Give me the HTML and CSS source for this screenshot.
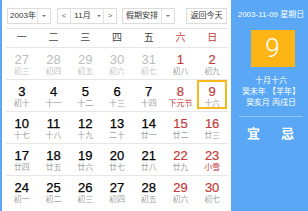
FILE: index.html
```html
<!DOCTYPE html>
<html lang="zh">
<head>
<meta charset="utf-8">
<link rel="stylesheet" href="styles.css">
</head>
<body>
<div class="cal">
  <div class="main">
    <div class="bar">
      <div class="ctl year"><span class="val">2003年</span><span class="arr"><i class="tri"></i></span></div>
      <div class="ctl month"><span class="nav">&lt;</span><span class="val">11月</span><span class="arr"><i class="tri"></i></span><span class="nav r">&gt;</span></div>
      <div class="ctl hol"><span class="val">假期安排</span><span class="arr"><i class="tri"></i></span></div>
      <div class="ctl today"><span class="val">返回今天</span></div>
    </div>
    <div class="wk head">
      <span>一</span><span>二</span><span>三</span><span>四</span><span>五</span><span class="red">六</span><span class="red">日</span>
    </div>
    <div class="wk">
      <div class="d other"><b>27</b><s>初三</s></div>
      <div class="d other"><b>28</b><s>初四</s></div>
      <div class="d other"><b>29</b><s>初五</s></div>
      <div class="d other"><b>30</b><s>初六</s></div>
      <div class="d other"><b>31</b><s>初七</s></div>
      <div class="d we"><b>1</b><s>初八</s></div>
      <div class="d we"><b>2</b><s>初九</s></div>
    </div>
    <div class="wk">
      <div class="d"><b>3</b><s>初十</s></div>
      <div class="d"><b>4</b><s>十一</s></div>
      <div class="d"><b>5</b><s>十二</s></div>
      <div class="d"><b>6</b><s>十三</s></div>
      <div class="d"><b>7</b><s>十四</s></div>
      <div class="d we fest"><b>8</b><s>下元节</s></div>
      <div class="d we cur"><b>9</b><s>十六</s></div>
    </div>
    <div class="wk">
      <div class="d"><b>10</b><s>十七</s></div>
      <div class="d"><b>11</b><s>十八</s></div>
      <div class="d"><b>12</b><s>十九</s></div>
      <div class="d"><b>13</b><s>二十</s></div>
      <div class="d"><b>14</b><s>廿一</s></div>
      <div class="d we"><b>15</b><s>廿二</s></div>
      <div class="d we"><b>16</b><s>廿三</s></div>
    </div>
    <div class="wk">
      <div class="d"><b>17</b><s>廿四</s></div>
      <div class="d"><b>18</b><s>廿五</s></div>
      <div class="d"><b>19</b><s>廿六</s></div>
      <div class="d"><b>20</b><s>廿七</s></div>
      <div class="d"><b>21</b><s>廿八</s></div>
      <div class="d we"><b>22</b><s>廿九</s></div>
      <div class="d we fest"><b>23</b><s>小雪</s></div>
    </div>
    <div class="wk">
      <div class="d"><b>24</b><s>初一</s></div>
      <div class="d"><b>25</b><s>初二</s></div>
      <div class="d"><b>26</b><s>初三</s></div>
      <div class="d"><b>27</b><s>初四</s></div>
      <div class="d"><b>28</b><s>初五</s></div>
      <div class="d we"><b>29</b><s>初六</s></div>
      <div class="d we"><b>30</b><s>初七</s></div>
    </div>
  </div>
  <div class="side">
    <div class="date">2003-11-09 星期日</div>
    <div class="big">9</div>
    <div class="lunar">十月十六</div>
    <div class="gz">癸未年 【羊年】</div>
    <div class="gz">癸亥月 丙戌日</div>
    <div class="yj"><span>宜</span><span>忌</span></div>
  </div>
</div>
</body>
</html>
```
FILE: styles.css
```css
html, body {
  margin: 0;
  padding: 0;
  background: #fff;
}
body {
  width: 308px;
  height: 211px;
  overflow: hidden;
  font-family: "Liberation Sans", "Noto Sans CJK SC", sans-serif;
}
.cal {
  display: flex;
  height: 211px;
}
.main {
  width: 231px;
  border-left: 2px solid #5aa8f5;
  padding: 8px 3px 0 4px;
  box-sizing: border-box;
}
.bar {
  display: flex;
  align-items: center;
  height: 16px;
  padding-bottom: 4px;
  padding-left: 1px;
  border-bottom: 1px solid #e4e4e4;
}
.ctl {
  display: flex;
  align-items: stretch;
  height: 16px;
  box-sizing: border-box;
  border: 1px solid #dcdcdc;
  font-size: 8px;
  color: #333;
  line-height: 14px;
}
.ctl .val {
  flex: 1;
  text-align: center;
}
.ctl .arr {
  width: 12px;
  border-left: 1px solid #e2e2e2;
  display: flex;
  align-items: center;
  justify-content: center;
}
.tri {
  display: block;
  width: 0;
  height: 0;
  border-left: 2px solid transparent;
  border-right: 2px solid transparent;
  border-top: 2px solid #777;
}
.year { width: 44px; }
.year .val { padding-left: 1px; }
.month { width: 60px; margin-left: 6px; }
.month .nav {
  width: 12px;
  text-align: center;
  color: #666;
  border-right: 1px solid #e2e2e2;
}
.month .nav.r { border-right: 0; border-left: 1px solid #e2e2e2; }
.month .arr { border-left: 0; width: 9px; }
.hol { width: 53px; margin-left: 5px; }
.today { width: 41px; margin-left: 11px; }
.wk {
  display: grid;
  grid-template-columns: repeat(7, 1fr);
  height: 32px;
  box-sizing: border-box;
  border-top: 1px solid #e6e6e6;
}
.wk.head {
  height: 18px;
  border-top: 0;
  font-size: 10px;
  line-height: 18px;
  color: #444;
  text-align: center;
}
.red { color: #c23b3b; }
.d {
  position: relative;
  text-align: center;
  padding-top: 5px;
}
.d b {
  display: block;
  font-weight: normal;
  font-size: 13px;
  line-height: 14px;
  color: #000;
  -webkit-text-stroke: 0.25px #000;
}
.d s {
  display: block;
  text-decoration: none;
  font-size: 8px;
  line-height: 10px;
  color: #a0a0a0;
}
.d.other b { color: #bdbdbd; -webkit-text-stroke: 0; }
.d.other s { color: #c4c4c4; }
.d.we b { color: #c23b3b; -webkit-text-stroke: 0.2px #c23b3b; }
.d.fest s { color: #c23b3b; }
.d.cur::after {
  content: "";
  position: absolute;
  left: 1px;
  right: 1px;
  top: 0;
  bottom: 2px;
  border: 2px solid #f6b81c;
}
.side {
  flex: 1;
  background: #5aa8f5;
  color: #fff;
  display: flex;
  flex-direction: column;
  align-items: center;
  padding-left: 3px;
}
.date {
  font-size: 8px;
  line-height: 10px;
  margin-top: 10px;
}
.big {
  width: 44px;
  height: 37px;
  margin-top: 10px;
  margin-left: 3px;
  background: #fdb515;
  font-family: Roboto, "Liberation Sans", sans-serif;
  font-weight: 300;
  font-size: 26px;
  line-height: 37px;
  text-align: center;
}
.lunar {
  font-size: 8px;
  line-height: 10px;
  margin-top: 9px;
}
.gz {
  font-size: 8px;
  line-height: 10px;
  margin-top: 1px;
}
.yj {
  margin-top: 8px;
  width: 64px;
  border-top: 1px solid rgba(255,255,255,0.35);
  display: flex;
  justify-content: space-between;
  padding: 9px 9px 0 8px;
  box-sizing: border-box;
  font-size: 13px;
  font-weight: bold;
  line-height: 16px;
}
```
